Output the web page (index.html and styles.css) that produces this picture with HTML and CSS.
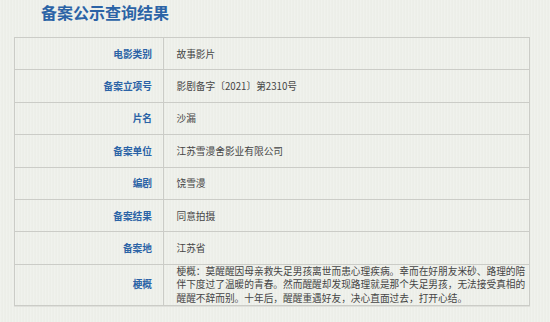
FILE: index.html
```html
<!DOCTYPE html>
<html lang="zh-CN">
<head>
<meta charset="utf-8">
<link rel="stylesheet" href="styles.css">
</head>
<body>
<div class="page">
  <h1 class="title">备案公示查询结果</h1>
  <table class="result">
    <tr><th>电影类别</th><td>故事影片</td></tr>
    <tr><th>备案立项号</th><td>影剧备字〔2021〕第2310号</td></tr>
    <tr><th>片名</th><td>沙漏</td></tr>
    <tr><th>备案单位</th><td>江苏雪漫舍影业有限公司</td></tr>
    <tr><th>编剧</th><td>饶雪漫</td></tr>
    <tr><th>备案结果</th><td>同意拍摄</td></tr>
    <tr><th>备案地</th><td>江苏省</td></tr>
    <tr class="summary"><th>梗概</th><td>梗概：莫醒醒因母亲救失足男孩离世而患心理疾病。幸而在好朋友米砂、路理的陪伴下度过了温暖的青春。然而醒醒却发现路理就是那个失足男孩，无法接受真相的醒醒不辞而别。十年后，醒醒重遇好友，决心直面过去，打开心结。</td></tr>
  </table>
</div>
</body>
</html>
```

FILE: styles.css
```css
html, body {
  margin: 0;
  padding: 0;
}
body {
  width: 550px;
  height: 322px;
  overflow: hidden;
  background-color: #edefe9;
  background-image: repeating-linear-gradient(90deg, rgba(255,255,255,0.18) 0px, rgba(255,255,255,0.18) 1px, rgba(0,0,0,0.012) 2px, rgba(0,0,0,0) 3px);
  font-family: "Noto Sans CJK SC", "Noto Sans", sans-serif;
}
.page {
  padding: 0 0 0 14px;
}
.title {
  margin: 0 0 13px 27px;
  font-size: 16px;
  line-height: 24px;
  font-weight: 700;
  color: #2b63a6;
}
.result {
  width: 516px;
  border-collapse: collapse;
  border: 1px solid #c9cac5;
  box-shadow: 0 1px 0 #dfe0db;
}
.result th,
.result td {
  border: 1px solid #cbccc7;
  height: 31.4px;
  padding: 0;
  font-size: 9.7px;
  vertical-align: middle;
}
.result th {
  width: 137px;
  padding-right: 11px;
  text-align: right;
  font-weight: 700;
  color: #2b63a6;
}
.result td {
  padding-left: 12.5px;
  text-align: left;
  font-weight: 400;
  color: #454545;
}
.result .summary th,
.result .summary td {
  height: 38px;
  line-height: 13.4px;
}
.result .summary td {
  vertical-align: top;
}
```
